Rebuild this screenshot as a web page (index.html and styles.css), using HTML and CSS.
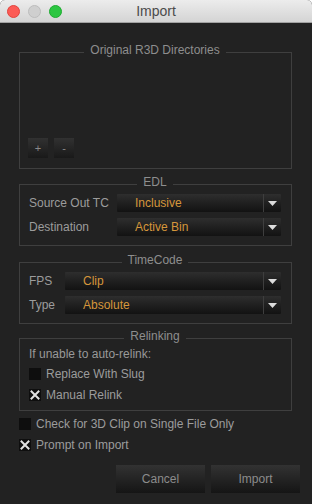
FILE: index.html
```html
<!DOCTYPE html>
<html>
<head>
<meta charset="utf-8">
<title>Import</title>
<link rel="stylesheet" href="styles.css">
</head>
<body>
<div class="window">
  <div class="titlebar">
    <div class="lights">
      <span class="light red"></span>
      <span class="light gray"></span>
      <span class="light green"></span>
    </div>
    <div class="title">Import</div>
    <div></div>
  </div>
  <div class="content">
    <fieldset class="group dirs">
      <legend>Original R3D Directories</legend>
      <div class="dir-list"></div>
      <div class="dir-buttons">
        <button class="small-btn">+</button>
        <button class="small-btn">-</button>
      </div>
    </fieldset>

    <fieldset class="group">
      <legend>EDL</legend>
      <div class="form-grid edl-grid">
        <span class="label">Source Out TC</span>
        <div class="combo">
          <span class="combo-value">Inclusive</span>
          <span class="combo-arrow"><svg width="9" height="5" viewBox="0 0 9 5"><polygon points="0,0 9,0 4.5,5" fill="#dcdcdc"/></svg></span>
        </div>
        <span class="label">Destination</span>
        <div class="combo">
          <span class="combo-value">Active Bin</span>
          <span class="combo-arrow"><svg width="9" height="5" viewBox="0 0 9 5"><polygon points="0,0 9,0 4.5,5" fill="#dcdcdc"/></svg></span>
        </div>
      </div>
    </fieldset>

    <fieldset class="group tc">
      <legend>TimeCode</legend>
      <div class="form-grid tc-grid">
        <span class="label">FPS</span>
        <div class="combo">
          <span class="combo-value">Clip</span>
          <span class="combo-arrow"><svg width="9" height="5" viewBox="0 0 9 5"><polygon points="0,0 9,0 4.5,5" fill="#dcdcdc"/></svg></span>
        </div>
        <span class="label">Type</span>
        <div class="combo">
          <span class="combo-value">Absolute</span>
          <span class="combo-arrow"><svg width="9" height="5" viewBox="0 0 9 5"><polygon points="0,0 9,0 4.5,5" fill="#dcdcdc"/></svg></span>
        </div>
      </div>
    </fieldset>

    <fieldset class="group relink">
      <legend>Relinking</legend>
      <div class="note">If unable to auto-relink:</div>
      <div class="check-row"><span class="box"></span><span class="check-label">Replace With Slug</span></div>
      <div class="check-row"><span class="box"><svg width="12" height="12" viewBox="0 0 12 12"><path d="M2.5 2.5 L9.5 9.5 M9.5 2.5 L2.5 9.5" stroke="#e2e2e2" stroke-width="2" stroke-linecap="square" fill="none"/></svg></span><span class="check-label">Manual Relink</span></div>
    </fieldset>

    <div class="checks">
      <div class="check-row"><span class="box"></span><span class="check-label">Check for 3D Clip on Single File Only</span></div>
      <div class="check-row"><span class="box"><svg width="12" height="12" viewBox="0 0 12 12"><path d="M2.5 2.5 L9.5 9.5 M9.5 2.5 L2.5 9.5" stroke="#e2e2e2" stroke-width="2" stroke-linecap="square" fill="none"/></svg></span><span class="check-label">Prompt on Import</span></div>
    </div>

    <div class="actions">
      <button class="btn">Cancel</button>
      <button class="btn">Import</button>
    </div>
  </div>
</div>
</body>
</html>
```

FILE: styles.css
```css
html {
  background: #ffffff;
}

body {
  margin: 0;
  font-family: "Liberation Sans", Arial, sans-serif;
  font-size: 12px;
}

.window {
  width: 312px;
  height: 504px;
  background: #222222;
  border-radius: 5px 5px 0 0;
  overflow: hidden;
}

.titlebar {
  height: 22px;
  border-bottom: 1px solid #a2a2a2;
  background: linear-gradient(#ececec, #d4d4d4);
  display: grid;
  grid-template-columns: 1fr auto 1fr;
  align-items: center;
}

.lights {
  display: flex;
  gap: 8px;
  padding-left: 7px;
  padding-top: 1px;
}

.light {
  width: 11px;
  height: 11px;
  border-radius: 50%;
  box-sizing: content-box;
}

.light.red {
  background: #fc5b55;
  border: 0.5px solid #e0443e;
}

.light.gray {
  background: #cfcfcf;
  border: 0.5px solid #bcbcbc;
}

.light.green {
  background: #2cc641;
  border: 0.5px solid #1eab30;
}

.title {
  font-size: 14px;
  color: #4b4b4b;
  line-height: 22px;
}

.content {
  padding: 20px 12px 0 19px;
}

.group {
  margin: 0 8px 0 0;
  padding: 1px 10px 9px 9px;
  border: 1px solid #3f3f3f;
  min-inline-size: 0;
}

.group legend {
  margin: 0 auto;
  padding: 0 6px 4px;
  font-size: 12px;
  line-height: 14px;
  color: #8e8e8e;
}

.group + .group {
  margin-top: 6px;
}

.group.tc {
  margin-top: 7px;
}

.group.relink {
  margin-top: 5px;
  padding-top: 0;
  padding-bottom: 5px;
}

.dirs {
  padding-top: 0;
  padding-bottom: 10px;
}

.dir-list {
  height: 77px;
}

.dir-buttons {
  display: flex;
  gap: 6px;
  margin-left: -1px;
}

.small-btn {
  width: 20px;
  height: 20px;
  padding: 0;
  border: none;
  background: linear-gradient(#313131, #191919);
  color: #8a8a8a;
  font-family: "Liberation Sans", Arial, sans-serif;
  font-size: 11px;
  line-height: 20px;
}

.form-grid {
  display: grid;
  row-gap: 6px;
  align-items: center;
}

.edl-grid {
  grid-template-columns: 88px 1fr;
}

.tc-grid {
  grid-template-columns: 36px 1fr;
}

.label {
  color: #9c9c9c;
  font-size: 12px;
  white-space: nowrap;
}

.combo {
  height: 18px;
  display: flex;
  background: linear-gradient(#2e2e2e, #121212);
  border-radius: 1px;
}

.combo-value {
  flex: 1;
  padding-left: 18px;
  color: #d5963b;
  font-size: 12px;
  line-height: 18px;
}

.combo-arrow {
  width: 17px;
  border-left: 1px solid #3e3e3e;
  display: flex;
  align-items: center;
  justify-content: center;
}

.note {
  height: 16px;
  line-height: 14px;
  color: #999999;
}

.check-row {
  height: 21px;
  display: flex;
  align-items: center;
  gap: 5px;
}

.box {
  width: 12px;
  height: 12px;
  background: #0e0e0e;
  display: block;
  flex: none;
}

.box svg {
  display: block;
}

.check-label {
  color: #9c9c9c;
  font-size: 12px;
}

.checks {
  margin-top: 2px;
}

.actions {
  margin-top: 10px;
  display: flex;
  justify-content: flex-end;
  gap: 6px;
}

.btn {
  width: 89px;
  height: 28px;
  padding: 0;
  border: none;
  background: linear-gradient(#323232, #151515);
  color: #8c8c8c;
  font-family: "Liberation Sans", Arial, sans-serif;
  font-size: 12px;
}
```
